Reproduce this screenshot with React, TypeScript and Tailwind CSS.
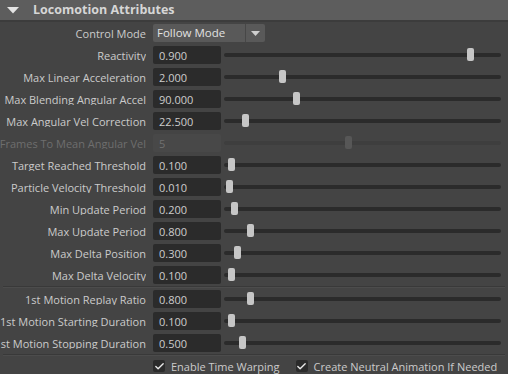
import { Check } from "lucide-react";

type Row = { label: string; value: string; pos: number; disabled?: boolean };

const mainRows: Row[] = [
  { label: "Reactivity", value: "0.900", pos: 470 },
  { label: "Max Linear Acceleration", value: "2.000", pos: 282 },
  { label: "Max Blending Angular Accel", value: "90.000", pos: 296 },
  { label: "Max Angular Vel Correction", value: "22.500", pos: 245 },
  { label: "Frames To Mean Angular Vel", value: "5", pos: 348, disabled: true },
  { label: "Target Reached Threshold", value: "0.100", pos: 231 },
  { label: "Particle Velocity Threshold", value: "0.010", pos: 229 },
  { label: "Min Update Period", value: "0.200", pos: 234 },
  { label: "Max Update Period", value: "0.800", pos: 250 },
  { label: "Max Delta Position", value: "0.300", pos: 237 },
  { label: "Max Delta Velocity", value: "0.100", pos: 231 },
];

const motionRows: Row[] = [
  { label: "1st Motion Replay Ratio", value: "0.800", pos: 250 },
  { label: "1st Motion Starting Duration", value: "0.100", pos: 231 },
  { label: "1st Motion Stopping Duration", value: "0.500", pos: 242 },
];

function Label({ text, disabled }: { text: string; disabled?: boolean }) {
  return (
    <div className="w-[146px] shrink-0 flex justify-end overflow-hidden">
      <span className={`shrink-0 whitespace-nowrap ${disabled ? "text-[#6e6e6e]" : "text-[#cbcbcb]"}`}>
        {text}
      </span>
    </div>
  );
}

function SliderRow({ row }: { row: Row }) {
  // track spans x 224..501 on the page
  const left = row.pos - 224 - 3.5;
  return (
    <div className="h-[22px] flex items-center">
      <Label text={row.label} disabled={row.disabled} />
      <div
        className={`ml-[7px] w-[68px] h-[18px] rounded-[2px] flex items-center px-[6px] shrink-0 ${
          row.disabled ? "bg-[#484848] text-[#707070]" : "bg-[#2b2b2b] text-[#cdcdcd]"
        }`}
      >
        {row.value}
      </div>
      <div className="ml-[3px] w-[277px] h-[14px] relative flex items-center shrink-0">
        <div className={`w-full h-[4px] rounded-full ${row.disabled ? "bg-[#3e3e3e]" : "bg-[#2b2b2b]"}`} />
        <div
          className={`absolute top-0 w-[7px] h-[13px] rounded-[2px] ${row.disabled ? "bg-[#575757]" : "bg-[#c6c6c6]"}`}
          style={{ left }}
        />
      </div>
    </div>
  );
}

function Separator() {
  return <div className="h-[2px] mx-[3px] border-t border-[#393939] border-b border-b-[#4c4c4c]" />;
}

function Checkbox({ label }: { label: string }) {
  return (
    <div className="flex items-center gap-[6px]">
      <div className="w-[12px] h-[12px] rounded-[2px] bg-[#2b2b2b] flex items-center justify-center">
        <Check className="w-[11px] h-[11px] text-[#e8e8e8]" strokeWidth={3} />
      </div>
      <span className="text-[#cbcbcb] whitespace-nowrap">{label}</span>
    </div>
  );
}

export default function App() {
  return (
    <div
      className="w-[508px] h-[374px] bg-[#444444] overflow-hidden text-[11px] leading-none"
      style={{ fontFamily: '"Open Sans", "Noto Sans", sans-serif' }}
    >
      {/* Section header */}
      <div className="h-[20px] bg-[#5d5d5d] flex items-center border-b-2 border-[#3c3c3c] box-content">
        <svg width="12" height="7" viewBox="0 0 12 7" className="ml-[7px]">
          <polygon points="0,0 12,0 6,6.5" fill="#e4e4e4" />
        </svg>
        <span className="ml-[14px] font-bold text-[12.5px] text-[#d6d6d6]">Locomotion Attributes</span>
      </div>

      {/* Control Mode */}
      <div className="h-[22px] flex items-center">
        <Label text="Control Mode" />
        <div className="ml-[7px] w-[112px] h-[18px] rounded-[2px] bg-[#595959] flex items-center shrink-0">
          <span className="flex-1 px-[4px] text-[#e2e2e2] text-[11.5px]">Follow Mode</span>
          <div className="w-[20px] h-full border-l border-[#474747] flex items-center justify-center">
            <svg width="9" height="5" viewBox="0 0 9 5">
              <polygon points="0,0 9,0 4.5,5" fill="#cfcfcf" />
            </svg>
          </div>
        </div>
      </div>

      {mainRows.map((r) => (
        <SliderRow key={r.label} row={r} />
      ))}

      <Separator />

      {motionRows.map((r) => (
        <SliderRow key={r.label} row={r} />
      ))}

      <Separator />

      <div className="h-[20px] flex items-center pl-[153px] gap-[16px]">
        <Checkbox label="Enable Time Warping" />
        <Checkbox label="Create Neutral Animation If Needed" />
      </div>
    </div>
  );
}
